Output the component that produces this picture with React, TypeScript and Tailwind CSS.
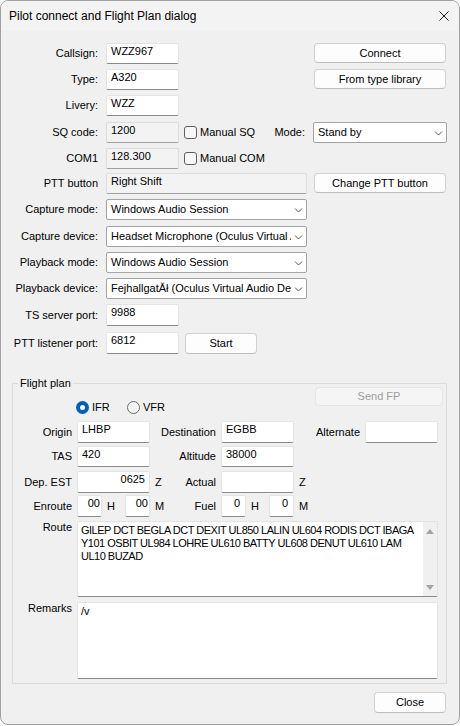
import React from "react";

const font = "font-['Liberation_Sans',Arial,sans-serif]";

function TextBox({
  value = "",
  className = "",
  readOnly = false,
  align = "left",
}: {
  value?: string;
  className?: string;
  readOnly?: boolean;
  align?: "left" | "right";
}) {
  return (
    <div
      className={`flex items-start shrink-0 pt-[1px] border rounded-[2px] leading-[13px] whitespace-nowrap overflow-hidden ${
        readOnly
          ? "bg-[#f3f3f3] border-[#dcdcdc] border-b-[#a0a0a0]"
          : "bg-white border-[#e3e3e3] border-b-[#8a8a8a]"
      } ${align === "right" ? "justify-end" : "justify-start pl-[4px]"} ${className}`}
    >
      {value}
    </div>
  );
}

function Combo({ value, className = "" }: { value: string; className?: string }) {
  return (
    <div
      className={`flex items-center shrink-0 bg-white border border-[#a3a3a3] rounded-[2px] ${className}`}
    >
      <span className="flex-1 overflow-hidden whitespace-nowrap pl-[4px] leading-[13px]">
        {value}
      </span>
      <svg width="15" height="8" viewBox="0 0 15 8" className="shrink-0">
        <path d="M4 2.5 L7.5 6 L11 2.5" fill="none" stroke="#555" strokeWidth="1" />
      </svg>
    </div>
  );
}

function Btn({
  children,
  className = "",
  disabled = false,
}: {
  children: React.ReactNode;
  className?: string;
  disabled?: boolean;
}) {
  return (
    <button
      type="button"
      className={`flex items-center justify-center shrink-0 rounded-[4px] border leading-[13px] ${
        disabled
          ? "bg-[#f5f5f5] border-[#e5e5e5] text-[#9d9d9d]"
          : "bg-[#fdfdfd] border-[#d0d0d0] border-b-[#bdbdbd] text-black"
      } ${className}`}
    >
      {children}
    </button>
  );
}

function Check({ label }: { label: string }) {
  return (
    <div className="flex items-center">
      <div className="w-[13px] h-[13px] rounded-[3px] border border-[#5f5f5f] bg-[#f7f7f7]" />
      <span className="ml-[3px]">{label}</span>
    </div>
  );
}

function Label({ children, className = "" }: { children: React.ReactNode; className?: string }) {
  return (
    <div className={`flex items-center justify-end shrink-0 whitespace-nowrap ${className}`}>
      {children}
    </div>
  );
}

export default function App() {
  return (
    <div className={`${font} text-[11px] text-black`}>
      <div className="w-[460px] h-[725px] rounded-[8px] border border-[#a0a0a0] bg-[#f0f0f0] overflow-hidden flex flex-col">
        {/* title bar */}
        <div className="h-[30px] shrink-0 bg-[#f3f3f3] flex items-center justify-between pl-[8px] pr-[10px] text-[12px]">
          <span>Pilot connect and Flight Plan dialog</span>
          <svg width="10" height="10" viewBox="0 0 10 10">
            <path d="M0.5 0.5 L9.5 9.5 M9.5 0.5 L0.5 9.5" stroke="#1a1a1a" strokeWidth="1" />
          </svg>
        </div>

        <div className="flex flex-col pt-[12px]">
          <div className="flex items-start">
            <Label className="w-[97px] h-[21px]">Callsign:</Label>
            <TextBox value="WZZ967" className="ml-[8px] w-[73px] h-[21px]" />
            <Btn className="ml-[135px] w-[132px] h-[20px]">Connect</Btn>
          </div>
          <div className="flex items-start mt-[5px]">
            <Label className="w-[97px] h-[21px]">Type:</Label>
            <TextBox value="A320" className="ml-[8px] w-[73px] h-[21px]" />
            <Btn className="ml-[135px] w-[132px] h-[20px]">From type library</Btn>
          </div>
          <div className="flex items-start mt-[5px]">
            <Label className="w-[97px] h-[21px]">Livery:</Label>
            <TextBox value="WZZ" className="ml-[8px] w-[73px] h-[21px]" />
          </div>
          <div className="flex items-start mt-[6px]">
            <Label className="w-[97px] h-[21px]">SQ code:</Label>
            <TextBox value="1200" readOnly className="ml-[8px] w-[73px] h-[21px]" />
            <div className="w-[126px] h-[21px] flex items-center justify-between pl-[5px]">
              <Check label="Manual SQ" />
              <span>Mode:</span>
            </div>
            <Combo value="Stand by" className="ml-[8px] w-[134px] h-[21px]" />
          </div>
          <div className="flex items-start mt-[5px]">
            <Label className="w-[97px] h-[21px]">COM1</Label>
            <TextBox value="128.300" readOnly className="ml-[8px] w-[73px] h-[21px]" />
            <div className="h-[21px] flex items-center pl-[5px]">
              <Check label="Manual COM" />
            </div>
          </div>
          <div className="flex items-start mt-[4px]">
            <Label className="w-[97px] h-[21px]">PTT button</Label>
            <TextBox value="Right Shift" readOnly className="ml-[8px] w-[201px] h-[21px]" />
            <Btn className="ml-[7px] w-[132px] h-[20px]">Change PTT button</Btn>
          </div>
          <div className="flex items-start mt-[5px]">
            <Label className="w-[97px] h-[21px]">Capture mode:</Label>
            <Combo value="Windows Audio Session" className="ml-[8px] w-[201px] h-[21px]" />
          </div>
          <div className="flex items-start mt-[6px]">
            <Label className="w-[97px] h-[21px]">Capture device:</Label>
            <Combo
              value="Headset Microphone (Oculus Virtual Audio Device)"
              className="ml-[8px] w-[201px] h-[21px]"
            />
          </div>
          <div className="flex items-start mt-[5px]">
            <Label className="w-[97px] h-[21px]">Playback mode:</Label>
            <Combo value="Windows Audio Session" className="ml-[8px] w-[201px] h-[21px]" />
          </div>
          <div className="flex items-start mt-[5px]">
            <Label className="w-[97px] h-[21px]">Playback device:</Label>
            <Combo
              value="FejhallgatĂł (Oculus Virtual Audio Device)"
              className="ml-[8px] w-[201px] h-[21px]"
            />
          </div>
          <div className="flex items-start mt-[5px]">
            <Label className="w-[97px] h-[22px]">TS server port:</Label>
            <TextBox value="9988" className="ml-[8px] w-[73px] h-[22px]" />
          </div>
          <div className="flex items-start mt-[6px]">
            <Label className="w-[97px] h-[22px]">PTT listener port:</Label>
            <TextBox value="6812" className="ml-[8px] w-[73px] h-[22px]" />
            <Btn className="ml-[6px] mt-[1px] w-[72px] h-[21px]">Start</Btn>
          </div>

          {/* flight plan group */}
          <div className="mt-[29px] ml-[11px] w-[435px] border border-[#dcdcdc] flex flex-col pb-[4px]">
            <div className="-mt-[7px] ml-[5px] px-[2px] w-fit bg-[#f0f0f0] leading-[13px]">
              Flight plan
            </div>
            <div className="flex items-start -mt-[3px]">
              <div className="ml-[63px] mt-[14px] flex items-center h-[13px]">
                <div className="w-[51px] flex items-center">
                  <div className="w-[13px] h-[13px] rounded-full bg-[#005fb8] flex items-center justify-center">
                    <div className="w-[5px] h-[5px] rounded-full bg-white" />
                  </div>
                  <span className="ml-[3px]">IFR</span>
                </div>
                <div className="w-[13px] h-[13px] rounded-full border border-[#6b6b6b] bg-[#f5f5f5]" />
                <span className="ml-[3px]">VFR</span>
              </div>
              <Btn disabled className="ml-auto mr-[3px] w-[128px] h-[19px]">
                Send FP
              </Btn>
            </div>

            <div className="flex items-start mt-[7px]">
              <Label className="w-[59px] h-[22px]">Origin</Label>
              <TextBox value="LHBP" className="ml-[5px] w-[73px] h-[22px]" />
              <Label className="w-[66px] h-[22px]">Destination</Label>
              <TextBox value="EGBB" className="ml-[5px] w-[73px] h-[22px]" />
              <Label className="w-[66px] h-[22px]">Alternate</Label>
              <TextBox className="ml-[5px] w-[73px] h-[22px]" />
            </div>
            <div className="flex items-start mt-[3px]">
              <Label className="w-[59px] h-[21px]">TAS</Label>
              <TextBox value="420" className="ml-[5px] w-[73px] h-[21px]" />
              <Label className="w-[66px] h-[21px]">Altitude</Label>
              <TextBox value="38000" className="ml-[5px] w-[73px] h-[21px]" />
            </div>
            <div className="flex items-start mt-[4px]">
              <Label className="w-[59px] h-[22px]">Dep. EST</Label>
              <TextBox value="0625" align="right" className="ml-[5px] w-[73px] h-[22px] pr-[4px]" />
              <div className="w-[66px] h-[22px] flex items-center justify-between pl-[5px]">
                <span>Z</span>
                <span>Actual</span>
              </div>
              <TextBox className="ml-[5px] w-[73px] h-[22px]" />
              <div className="h-[22px] flex items-center ml-[5px]">Z</div>
            </div>
            <div className="flex items-start mt-[2px]">
              <Label className="w-[59px] h-[22px]">Enroute</Label>
              <TextBox value="00" align="right" className="ml-[5px] w-[25px] h-[22px] pr-[1px]" />
              <div className="w-[23px] h-[22px] flex items-center pl-[5px]">H</div>
              <TextBox value="00" align="right" className="w-[25px] h-[22px] pr-[1px]" />
              <div className="w-[66px] h-[22px] flex items-center justify-between pl-[5px]">
                <span>M</span>
                <span>Fuel</span>
              </div>
              <TextBox value="0" align="right" className="ml-[5px] w-[25px] h-[22px] pr-[5px]" />
              <div className="w-[23px] h-[22px] flex items-center pl-[5px]">H</div>
              <TextBox value="0" align="right" className="w-[25px] h-[22px] pr-[5px]" />
              <div className="h-[22px] flex items-center ml-[5px]">M</div>
            </div>

            <div className="flex items-start mt-[4px]">
              <div className="w-[59px] text-right leading-[13px] shrink-0">Route</div>
              <div className="ml-[5px] w-[361px] h-[76px] flex bg-white border border-[#e3e3e3] border-b-[#8a8a8a] rounded-[2px]">
                <div className="flex-1 pl-[3px] pt-[2px] leading-[13px] whitespace-nowrap tracking-[-0.5px]">
                  <div>GILEP DCT BEGLA DCT DEXIT UL850 LALIN UL604 RODIS DCT IBAGA</div>
                  <div>Y101 OSBIT UL984 LOHRE UL610 BATTY UL608 DENUT UL610 LAM</div>
                  <div>UL10 BUZAD</div>
                </div>
                <div className="w-[14px] bg-[#f0f0f0] flex flex-col items-center justify-between pt-[7px] pb-[6px]">
                  <svg width="8" height="5" viewBox="0 0 8 5">
                    <path d="M0 5 L4 0 L8 5 Z" fill="#a3a3a3" />
                  </svg>
                  <svg width="8" height="5" viewBox="0 0 8 5">
                    <path d="M0 0 L8 0 L4 5 Z" fill="#a3a3a3" />
                  </svg>
                </div>
              </div>
            </div>
            <div className="flex items-start mt-[5px]">
              <div className="w-[59px] text-right leading-[13px] shrink-0">Remarks</div>
              <div className="ml-[5px] w-[361px] h-[77px] bg-white border border-[#e3e3e3] border-b-[#8a8a8a] rounded-[2px] pl-[3px] pt-[2px] leading-[13px]">
                /v
              </div>
            </div>
          </div>

          <div className="flex mt-[8px]">
            <Btn className="ml-[373px] w-[72px] h-[21px]">Close</Btn>
          </div>
        </div>
      </div>
    </div>
  );
}
